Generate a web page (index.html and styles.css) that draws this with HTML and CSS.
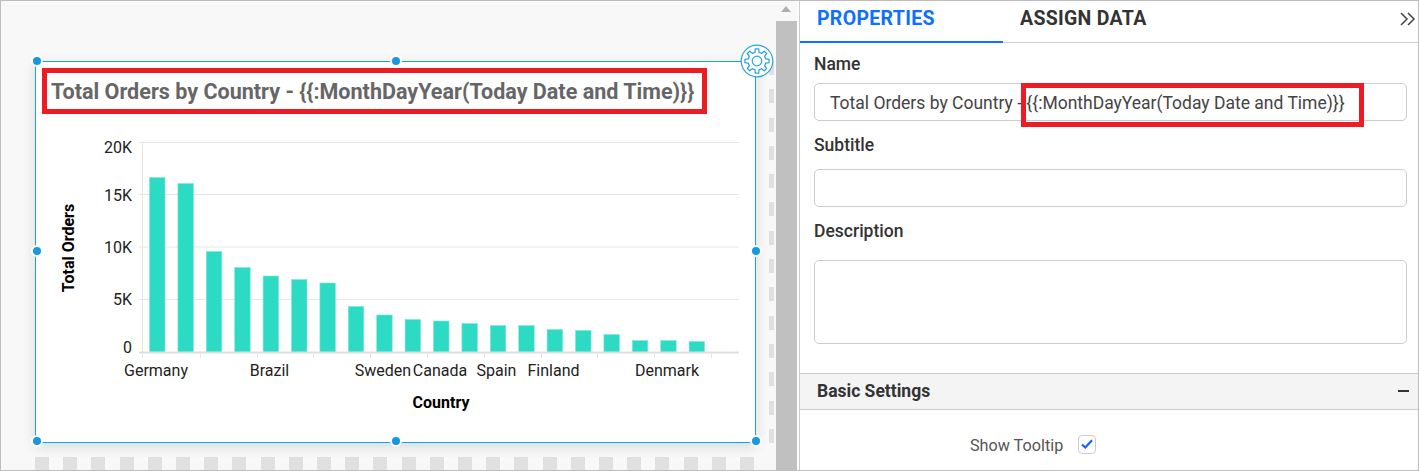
FILE: index.html
```html
<!DOCTYPE html>
<html lang="en">
<head>
    <meta charset="UTF-8">
    <meta name="viewport" content="width=device-width, initial-scale=1.0">
    <title>Widget Properties</title>
    <link rel="stylesheet" href="styles.css">
</head>
<body>
    <div class="app">
        <section class="canvas">
            <div class="canvas-row">
                <div class="widget">
                    <h1 class="widget-title">Total Orders by Country - {{:MonthDayYear(Today Date and Time)}}</h1>
                    <svg class="chart" width="719" height="328" viewBox="36 114 719 328">
                        <g class="grid">
                            <path d="M139 142.500H739M139 194.500H739M139 247H739M139 299.500H739"/>
                            <path d="M142.500 142V358"/>
                        </g>
                        <g class="bars">
                            <rect x="149.500" y="177.500" width="15.500" height="175"/>
                            <rect x="177.900" y="183.500" width="15.500" height="169"/>
                            <rect x="206.300" y="251.500" width="15.500" height="101"/>
                            <rect x="234.700" y="267.500" width="15.500" height="85"/>
                            <rect x="263.100" y="276" width="15.500" height="76.500"/>
                            <rect x="291.500" y="279.500" width="15.500" height="73"/>
                            <rect x="319.900" y="283" width="15.500" height="69.500"/>
                            <rect x="348.300" y="306.500" width="15.500" height="46"/>
                            <rect x="376.700" y="315" width="15.500" height="37.500"/>
                            <rect x="405.100" y="319.500" width="15.500" height="33"/>
                            <rect x="433.500" y="321" width="15.500" height="31.500"/>
                            <rect x="461.900" y="323.500" width="15.500" height="29"/>
                            <rect x="490.300" y="325.500" width="15.500" height="27"/>
                            <rect x="518.700" y="325.500" width="15.500" height="27"/>
                            <rect x="547.100" y="329.500" width="15.500" height="23"/>
                            <rect x="575.500" y="330.500" width="15.500" height="22"/>
                            <rect x="603.900" y="334.500" width="15.500" height="18"/>
                            <rect x="632.300" y="340.500" width="15.500" height="12"/>
                            <rect x="660.700" y="340.500" width="15.500" height="12"/>
                            <rect x="689.100" y="341.500" width="15.500" height="11"/>
                        </g>
                        <g class="grid">
                            <path class="axis" d="M139 352.500H739"/>
                            <path d="M200.500 352V358M257.500 352V358M313.500 352V358M370.500 352V358M427.500 352V358M484.500 352V358M541.500 352V358M597.500 352V358M654.500 352V358M711.500 352V358"/>
                        </g>
                        <g class="y-labels">
                            <text x="132" y="153">20K</text>
                            <text x="132" y="201">15K</text>
                            <text x="132" y="253">10K</text>
                            <text x="132" y="305">5K</text>
                            <text x="132" y="353">0</text>
                        </g>
                        <g class="x-labels">
                            <text x="156" y="376">Germany</text>
                            <text x="269.500" y="376">Brazil</text>
                            <text x="383" y="376">Sweden</text>
                            <text x="440" y="376">Canada</text>
                            <text x="496.500" y="376">Spain</text>
                            <text x="553.500" y="376">Finland</text>
                            <text x="667" y="376">Denmark</text>
                        </g>
                        <text class="axis-title" x="441" y="408">Country</text>
                        <text class="axis-title" transform="translate(74 248) rotate(-90)">Total Orders</text>
                    </svg>
                    <span class="handle handle-tl"></span>
                    <span class="handle handle-tc"></span>
                    <span class="handle handle-ml"></span>
                    <span class="handle handle-mr"></span>
                    <span class="handle handle-bl"></span>
                    <span class="handle handle-bc"></span>
                    <span class="handle handle-br"></span>
                    <svg class="gear" width="34" height="34" viewBox="-17 -17 34 34">
                        <circle class="gear-ring" r="15.800"/>
                        <path class="gear-line" transform="scale(1.060)" d="M-1.910 -8.280L-1.600 -11.390L1.600 -11.390L1.910 -8.280L4.500 -7.210L6.920 -9.180L9.180 -6.920L7.210 -4.500L8.280 -1.910L11.390 -1.600L11.390 1.600L8.280 1.910L7.210 4.500L9.180 6.920L6.920 9.180L4.500 7.210L1.910 8.280L1.600 11.390L-1.600 11.390L-1.910 8.280L-4.500 7.210L-6.920 9.180L-9.180 6.920L-7.210 4.500L-8.280 1.910L-11.390 1.600L-11.390 -1.600L-8.280 -1.910L-7.210 -4.500L-9.180 -6.920L-6.920 -9.180L-4.500 -7.210Z"/>
                        <circle class="gear-line" r="4.800"/>
                    </svg>
                </div>
                <div class="ruler-v"></div>
            </div>
            <div class="ruler-h"></div>
        </section>

        <div class="scrollbar">
            <span class="scroll-arrow"></span>
            <div class="scroll-thumb"></div>
        </div>

        <aside class="panel">
            <nav class="tabs">
                <div class="tab active">PROPERTIES</div>
                <div class="tab">ASSIGN DATA</div>
                <svg class="collapse" width="16" height="14" viewBox="0 0 16 14">
                    <path d="M1 1L7 7L1 13M8 1L14 7L8 13"/>
                </svg>
            </nav>
            <div class="fields">
                <label class="field-label">Name</label>
                <div class="input-wrap">
                    <div class="input">Total Orders by Country - {{:MonthDayYear(Today Date and Time)}}</div>
                    <span class="highlight"></span>
                </div>
                <label class="field-label label-subtitle">Subtitle</label>
                <div class="input"></div>
                <label class="field-label label-description">Description</label>
                <div class="input textarea"></div>
            </div>
            <div class="section-head">
                <span>Basic Settings</span>
                <span class="minus"></span>
            </div>
            <div class="option">
                <span class="option-label">Show Tooltip</span>
                <span class="checkbox">
                    <svg width="12" height="10" viewBox="0 0 12 10"><path d="M1 5.500L4.300 8.500L11 1.300"/></svg>
                </span>
            </div>
        </aside>
    </div>
</body>
</html>
```

FILE: styles.css
```css
* {
    box-sizing: border-box;
}
body {
    margin: 0;
    font-family: Roboto, Arial, sans-serif;
    background: white;
    overflow: hidden;
}
.app {
    display: flex;
    width: 1419px;
    height: 471px;
    border: 1px solid #bdbdbd;
    overflow: hidden;
}

/* canvas */
.canvas {
    width: 775px;
    background: #f8f8f8;
    padding: 60px 0 0 34px;
    flex-shrink: 0;
}
.canvas-row {
    display: flex;
    height: 382px;
}
.widget {
    position: relative;
    width: 721px;
    height: 382px;
    background: white;
    border: 1px solid #1ba1e2;
    border-bottom-color: #00aeef;
    box-shadow: 0 4px 12px rgba(0, 0, 0, 0.12);
}
.widget-title {
    margin: 6px 0 0 6px;
    width: 665px;
    height: 46px;
    padding: 1px 0 0 4px;
    border: 5px solid #ed1c24;
    font-size: 21.550px;
    font-weight: 700;
    line-height: 36px;
    color: #666;
    white-space: nowrap;
}
.chart {
    display: block;
}
.grid path {
    fill: none;
    stroke: #e6e6e6;
    stroke-width: 1;
}
.grid .axis {
    stroke: #dfdfdf;
    stroke-width: 2;
}
.bars rect {
    fill: #2ddbc4;
    stroke: #7de9da;
    stroke-width: 0.6;
}
.y-labels text {
    font-size: 16px;
    fill: #222;
    text-anchor: end;
}
.x-labels text {
    font-size: 16px;
    fill: #222;
    text-anchor: middle;
}
.axis-title {
    font-size: 16px;
    font-weight: 700;
    fill: #000;
    text-anchor: middle;
}

.handle {
    position: absolute;
    width: 8px;
    height: 8px;
    border-radius: 50%;
    background: #1798de;
    box-shadow: 0 0 0 2px white;
}
.handle-tl { left: -3.500px; top: -5px; }
.handle-tc { left: 355.500px; top: -5px; }
.handle-ml { left: -3.500px; top: 185px; }
.handle-mr { right: -5px; top: 185px; }
.handle-bl { left: -3.500px; bottom: -3px; }
.handle-bc { left: 355.500px; bottom: -3px; }
.handle-br { right: -5px; bottom: -3px; }

.gear {
    position: absolute;
    right: -19px;
    top: -18px;
}
.gear-ring {
    fill: white;
    stroke: #2aa3e2;
    stroke-width: 1.2;
}
.gear-line {
    fill: none;
    stroke: #2aa3e2;
    stroke-width: 1.2;
    stroke-linejoin: round;
}

.ruler-v {
    width: 5px;
    margin-left: 13px;
    background: repeating-linear-gradient(to bottom, #e0e0e0 0, #e0e0e0 14px, transparent 14px, transparent 28.300px);
}
.ruler-h {
    width: 720px;
    height: 14px;
    margin-top: 14px;
    background: repeating-linear-gradient(to right, #e0e0e0 0, #e0e0e0 14px, transparent 14px, transparent 28.200px);
}

/* scrollbar */
.scrollbar {
    width: 24px;
    flex-shrink: 0;
    display: flex;
    flex-direction: column;
    align-items: flex-start;
    background: white;
    border-right: 1px solid #ccc;
}
.scroll-arrow {
    display: block;
    width: 21px;
    height: 20px;
    background: #f8f8f8;
    position: relative;
}
.scroll-arrow::after {
    content: "";
    position: absolute;
    left: 5px;
    top: 5px;
    border: 5.500px solid transparent;
    border-top: 0;
    border-bottom: 6px solid #b0b0b0;
}
.scroll-thumb {
    width: 21px;
    flex: 1;
    background: #c0c0c0;
}

/* right panel */
.panel {
    flex: 1;
    min-width: 0;
    color: #333;
}
.tabs {
    display: flex;
    align-items: center;
    height: 42px;
    border-bottom: 1px solid #ccc;
}
.tab {
    width: 203px;
    height: 42px;
    padding: 6px 0 0 17px;
    font-size: 19.500px;
    font-weight: 700;
    letter-spacing: 0.3px;
    line-height: 24px;
}
.tab.active {
    color: #0f6fff;
    border-bottom: 2px solid #0f6fff;
}
.collapse {
    margin-left: auto;
    margin-right: 2px;
    margin-top: -6px;
}
.collapse path {
    fill: none;
    stroke: #444;
    stroke-width: 1.500;
}
.fields {
    padding: 0 11px 0 14px;
}
.field-label {
    display: block;
    height: 40px;
    padding-top: 11px;
    font-size: 17.500px;
    font-weight: 500;
    line-height: 20px;
}
.label-subtitle {
    height: 48px;
    padding-top: 14px;
}
.label-description {
    height: 53px;
    padding-top: 14px;
}
.input {
    height: 38px;
    padding-left: 15px;
    border: 1px solid #ccc;
    border-radius: 5px;
    font-size: 17.500px;
    line-height: 38px;
    color: #444;
    white-space: nowrap;
}
.textarea {
    height: 84px;
}
.input-wrap {
    position: relative;
}
.highlight {
    position: absolute;
    left: 207px;
    top: 0;
    width: 343px;
    height: 44px;
    border: 5px solid #ed1c24;
}
.section-head {
    display: flex;
    align-items: center;
    justify-content: space-between;
    height: 37px;
    margin-top: 29px;
    padding: 0 9px 2px 17px;
    background: #f4f4f4;
    border: solid #ccc;
    border-width: 1px 0;
    font-size: 17.500px;
    font-weight: 700;
}
.minus {
    width: 11px;
    height: 2px;
    background: #333;
}
.option {
    display: flex;
    align-items: center;
    gap: 15px;
    padding: 23px 0 0 170px;
    font-size: 16.200px;
    color: #555;
}
.option-label {
    padding-top: 3px;
}
.checkbox {
    display: flex;
    align-items: center;
    justify-content: center;
    width: 18px;
    height: 19px;
    border: 1px solid #ccc;
    border-radius: 4px;
}
.checkbox path {
    fill: none;
    stroke: #1a5fff;
    stroke-width: 2.200;
}
```
